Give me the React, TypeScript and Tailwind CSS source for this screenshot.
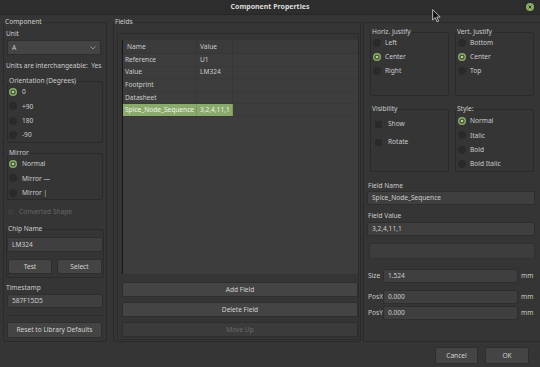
import React from "react";

type Kids = { children?: React.ReactNode };

function Group({ title, className = "", boxClass = "", children }: Kids & { title: string; className?: string; boxClass?: string }) {
  return (
    <div className={className}>
      <div className="relative z-10 h-[8px] leading-[8px] pl-[1px]">
        <span className="bg-[#353535] px-[1px]">{title}</span>
      </div>
      <div className={"-mt-[4px] border border-[#2a2a2a] rounded-[2px] " + boxClass}>{children}</div>
    </div>
  );
}

function Radio({ label, checked = false, row = "h-[14.3px]", gap = "gap-[5px]" }: { label: string; checked?: boolean; row?: string; gap?: string }) {
  return (
    <div className={"flex items-center " + row + " " + gap}>
      <svg width="8" height="8" viewBox="0 0 8 8" className="shrink-0">
        {checked ? (
          <>
            <circle cx="4" cy="4" r="4" fill="#8aad6a" />
            <circle cx="4" cy="4" r="2.6" fill="#45533a" />
            <circle cx="4" cy="4" r="1.3" fill="#b3d092" />
          </>
        ) : (
          <circle cx="4" cy="4" r="4" fill="#2a2a2a" />
        )}
      </svg>
      <span>{label}</span>
    </div>
  );
}

function Check({ label }: { label: string }) {
  return (
    <div className="flex items-center h-[18px] gap-[6px]">
      <span className="w-[7px] h-[7px] rounded-[1px] bg-[#2a2a2a]" />
      <span>{label}</span>
    </div>
  );
}

function Field({ value, className = "" }: { value: string; className?: string }) {
  return (
    <div className={"flex items-center px-[4px] bg-[#3f3f3f] border border-[#2e2e2e] rounded-[2px] " + className}>
      {value}
    </div>
  );
}

function Btn({ label, className = "", disabled = false }: { label: string; className?: string; disabled?: boolean }) {
  return (
    <div
      className={
        "flex items-center justify-center border border-[#2e2e2e] rounded-[2px] " +
        (disabled ? "bg-[#3b3b3b] text-[#6a6a6a] " : "bg-[#444444] text-[#d2d2d2] ") +
        className
      }
    >
      {label}
    </div>
  );
}

const rows = [
  ["Reference", "U1"],
  ["Value", "LM324"],
  ["Footprint", ""],
  ["Datasheet", ""],
  ["Spice_Node_Sequence", "3,2,4,11,1"],
];

export default function App() {
  return (
    <div className="relative w-[540px] h-[367px] overflow-hidden flex flex-col bg-[#353535] font-['Noto_Sans',sans-serif] text-[6.6px] text-[#cccccc]">
      {/* title bar */}
      <div className="relative h-[15px] shrink-0 flex items-center justify-center bg-[#2d2d2d] border-b border-[#262626]">
        <span className="font-bold text-[7px] text-[#dcdcdc]">Component Properties</span>
        <svg width="8" height="8" viewBox="0 0 8 8" className="absolute right-[6px] top-[3px]">
          <circle cx="4" cy="4" r="4" fill="#8aad6a" />
          <path d="M2.6 2.6 L5.4 5.4 M5.4 2.6 L2.6 5.4" stroke="#2d3a24" strokeWidth="1" />
        </svg>
      </div>

      <div className="flex h-[327px] shrink-0">
        {/* left column */}
        <div className="w-[104px] ml-[3px] pt-[3px]">
          <Group title="Component" boxClass="h-[320px] pt-[7px] px-[3px] flex flex-col">
            <div className="h-[8px] leading-[8px] -ml-[1px]">Unit</div>
            <div className="mt-[2px] h-[15px] w-[94px] flex items-center justify-between px-[4px] bg-[#444444] border border-[#2e2e2e] rounded-[2px]">
              <span>A</span>
              <svg width="6" height="4" viewBox="0 0 6 4">
                <path d="M0.5 0.5 L3 3 L5.5 0.5" stroke="#9a9a9a" strokeWidth="0.9" fill="none" />
              </svg>
            </div>
            <div className="mt-[7px] h-[8px] leading-[8px] -ml-[1px] whitespace-pre">Units are interchangeable:  Yes</div>
            <Group title="Orientation (Degrees)" className="mt-[7px]" boxClass="h-[62px] pt-[3px] pl-[1px]">
              <Radio label="0" checked />
              <Radio label="+90" />
              <Radio label="180" />
              <Radio label="-90" />
            </Group>
            <Group title="Mirror" className="mt-[6px]" boxClass="h-[47px] pt-[3px] pl-[1px]">
              <Radio label="Normal" checked />
              <Radio label="Mirror —" />
              <Radio label="Mirror |" />
            </Group>
            <div className="mt-[7px] h-[10px] flex items-center gap-[4px] text-[#666666]">
              <span className="w-[8px] h-[8px] rounded-[1px] bg-[#3a3a3a] border border-[#333333]" />
              <span>Converted Shape</span>
            </div>
            <Group title="Chip Name" className="mt-[8px] -mx-[1px]" boxClass="h-[49px] pt-[7px] flex flex-col">
              <Field value="LM324" className="h-[15px]" />
              <div className="mt-[7px] flex gap-[5px] px-[1px]">
                <Btn label="Test" className="h-[15px] w-[44px]" />
                <Btn label="Select" className="h-[15px] w-[45px]" />
              </div>
            </Group>
            <div className="mt-[6px] h-[8px] leading-[8px] -ml-[1px]">Timestamp</div>
            <Field value="587F15D5" className="mt-[2px] h-[14px] w-[96px]" />
            <div className="mt-[7px] h-px w-[96px] bg-[#2c2c2c]" />
            <Btn label="Reset to Library Defaults" className="mt-[6px] h-[16px] w-[95px]" />
          </Group>
        </div>

        {/* middle column */}
        <div className="w-[248px] ml-[6px] pt-[3px]">
          <Group title="Fields" boxClass="h-[320px]">
            <div className="ml-[3px] mt-[10px] w-[242px] h-[307px] border border-[#2c2c2c] pt-[6px] pl-[4px] flex flex-col">
              <div className="w-[236px] h-[234px] bg-[#3d3d3d] border-l border-[#151515] flex flex-col">
                <div className="flex h-[14px] border-b border-[#353535] bg-[#3b3b3b]">
                  <div className="w-[74px] pl-[4px] flex items-center border-r border-[#353535]">Name</div>
                  <div className="w-[36px] pl-[3px] flex items-center border-r border-[#353535]">Value</div>
                  <div className="flex-1" />
                </div>
                {rows.map(([n, v], i) => {
                  const sel = i === rows.length - 1;
                  return (
                    <div key={n} className="flex h-[12.6px] border-b border-[#393939]">
                      <div
                        className={
                          "w-[74px] pl-[2px] flex items-center border-r " +
                          (sel ? "bg-[#89aa6c] text-[#eef3e8] border-[#7a9960]" : "border-[#373737]")
                        }
                      >
                        {n}
                      </div>
                      <div
                        className={
                          "w-[36px] pl-[3px] flex items-center border-r " +
                          (sel ? "bg-[#89aa6c] text-[#eef3e8] border-[#7a9960]" : "border-[#373737]")
                        }
                      >
                        {v}
                      </div>
                      <div className="flex-1" />
                    </div>
                  );
                })}
              </div>
              <Btn label="Add Field" className="mt-[8px] h-[15px] w-[236px]" />
              <Btn label="Delete Field" className="mt-[5px] h-[15px] w-[236px]" />
              <Btn label="Move Up" disabled className="mt-[5px] h-[15px] w-[236px]" />
            </div>
          </Group>
        </div>

        {/* right column */}
        <div className="ml-[2px] mt-[7px] flex-1 h-[320px] border-l border-t border-b border-[#2a2a2a] flex flex-col">
          <div className="pt-[5px] pl-[6px] flex gap-[6px]">
            <Group title="Horiz. Justify" className="w-[79px]" boxClass="h-[64px] pt-[3px] pl-[2px]">
              <Radio label="Left" row="h-[14px]" gap="gap-[4px]" />
              <Radio label="Center" checked row="h-[14px]" gap="gap-[4px]" />
              <Radio label="Right" row="h-[14px]" gap="gap-[4px]" />
            </Group>
            <Group title="Vert. Justify" className="w-[79px]" boxClass="h-[64px] pt-[3px] pl-[2px]">
              <Radio label="Bottom" row="h-[14px]" gap="gap-[4px]" />
              <Radio label="Center" checked row="h-[14px]" gap="gap-[4px]" />
              <Radio label="Top" row="h-[14px]" gap="gap-[4px]" />
            </Group>
          </div>
          <div className="mt-[9px] pl-[6px] flex gap-[6px]">
            <Group title="Visibility" className="w-[79px]" boxClass="h-[63px] pt-[5px] pl-[4px]">
              <Check label="Show" />
              <Check label="Rotate" />
            </Group>
            <Group title="Style:" className="w-[79px]" boxClass="h-[63px] pt-[4px] pl-[2px]">
              <Radio label="Normal" checked gap="gap-[4px]" />
              <Radio label="Italic" gap="gap-[4px]" />
              <Radio label="Bold" gap="gap-[4px]" />
              <Radio label="Bold Italic" gap="gap-[4px]" />
            </Group>
          </div>
          <div className="mt-[10px] pl-[4px] h-[8px] leading-[8px]">Field Name</div>
          <Field value="Spice_Node_Sequence" className="mt-[1px] ml-[3px] h-[14px] w-[168px]" />
          <div className="mt-[7px] pl-[4px] h-[8px] leading-[8px]">Field Value</div>
          <Field value="3,2,4,11,1" className="mt-[2px] ml-[3px] h-[14px] w-[168px]" />
          <div className="mt-[7px] ml-[5px] h-[16px] w-[166px] bg-[#3d3d3d] border border-[#303030] rounded-[2px]" />
          <div className="mt-[10px] flex items-center h-[14px]">
            <span className="w-[19px] pl-[4px]">Size</span>
            <Field value="1.524" className="h-[14px] w-[135px]" />
            <span className="ml-[3px]">mm</span>
          </div>
          <div className="mt-[7px] flex items-center h-[14px]">
            <span className="w-[19px] pl-[4px]">PosX</span>
            <Field value="0.000" className="h-[14px] w-[135px]" />
            <span className="ml-[3px]">mm</span>
          </div>
          <div className="mt-[2px] flex items-center h-[14px]">
            <span className="w-[19px] pl-[4px]">PosY</span>
            <Field value="0.000" className="h-[14px] w-[135px]" />
            <span className="ml-[3px]">mm</span>
          </div>
        </div>
      </div>

      {/* footer */}
      <div className="flex justify-end pt-[5px] pr-[11px] gap-[7px]">
        <Btn label="Cancel" className="h-[17px] w-[43px]" />
        <Btn label="OK" className="h-[17px] w-[44px]" />
      </div>

      {/* mouse pointer */}
      <svg width="10" height="14" viewBox="0 0 10 14" className="absolute left-[432px] top-[9px]">
        <path d="M0.6 0.6 L0.6 11 L3.2 8.6 L5 12.8 L6.6 12.1 L4.9 8 L8.2 8 Z" fill="#151515" stroke="#d8d8d8" strokeWidth="0.8" />
      </svg>
    </div>
  );
}
